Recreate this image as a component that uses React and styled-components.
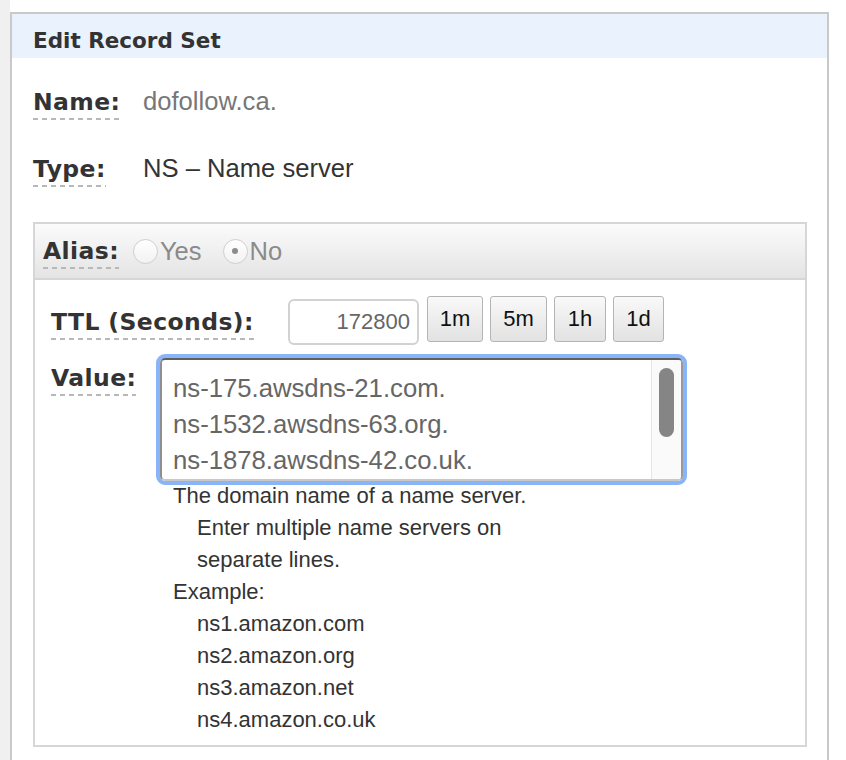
import React from "react";
import styled, { createGlobalStyle } from "styled-components";

const GlobalStyle = createGlobalStyle`
  html, body {
    margin: 0;
    padding: 0;
    background: #fff;
  }
  body {
    font-family: "Liberation Sans", Arial, sans-serif;
  }
`;

const Page = styled.div`
  display: flex;
  min-height: 760px;
`;

const Strip = styled.div`
  width: 10px;
  flex: none;
  background: #f0f0f0;
`;

const Panel = styled.div`
  box-sizing: border-box;
  width: 819px;
  margin-top: 12px;
  border: 2px solid #c9c9c9;
  border-bottom: none;
`;

const Header = styled.div`
  box-sizing: border-box;
  height: 44px;
  display: flex;
  align-items: center;
  padding: 8px 0 0 21px;
  background: #eaf2fd;
  font-family: "DejaVu Sans", Verdana, sans-serif;
  font-weight: bold;
  font-size: 21.5px;
  color: #333;
`;

const Body = styled.div`
  padding: 29px 20px 0 21px;
`;

const Row = styled.div`
  display: flex;
  align-items: baseline;
  margin-bottom: ${(p) => p.$gap || 0}px;
`;

const Label = styled.span`
  display: inline-block;
  flex: none;
  width: ${(p) => (p.$width ? p.$width + "px" : "auto")};
  margin-top: ${(p) => p.$top || 0}px;
  font-family: "DejaVu Sans", Verdana, sans-serif;
  font-weight: bold;
  font-size: 23.5px;
  letter-spacing: 0.4px;
  line-height: 28px;
  color: #333;
`;

const Dashed = styled.span`
  display: inline-block;
  padding-bottom: 4px;
  background: repeating-linear-gradient(to right, #b8b8b8 0 5px, transparent 5px 9px) left bottom / 100% 2px no-repeat;
`;

const Value = styled.span`
  font-size: 25.6px;
  color: ${(p) => (p.$muted ? "#777" : "#333")};
`;

const AliasBox = styled.div`
  margin-top: 35px;
  border: 2px solid #d6d6d6;
`;

const AliasBar = styled.div`
  height: 54px;
  display: flex;
  align-items: center;
  padding-left: 8px;
  background: linear-gradient(#fbfbfb, #e4e4e4);
  border-bottom: 2px solid #d6d6d6;
`;

const RadioItem = styled.label`
  display: flex;
  align-items: center;
  margin-left: ${(p) => p.$ml || 0}px;
  font-size: 25.5px;
  color: #8a8a8a;
`;

const RadioCircle = styled.span`
  box-sizing: border-box;
  width: 25px;
  height: 25px;
  margin-right: 2px;
  border-radius: 50%;
  border: 1px solid #cfcfcf;
  background: linear-gradient(#ffffff, #f2f2f2);
  display: flex;
  align-items: center;
  justify-content: center;
  &::after {
    content: "";
    width: 6px;
    height: 6px;
    border-radius: 50%;
    background: #8c8c8c;
    display: ${(p) => (p.$checked ? "block" : "none")};
  }
`;

const Inner = styled.div`
  padding: 16px 16px 9px 16px;
`;

const FieldRow = styled.div`
  display: flex;
  align-items: flex-start;
  margin-top: ${(p) => p.$top || 0}px;
`;

const TtlInput = styled.div`
  box-sizing: border-box;
  width: 131px;
  height: 46px;
  margin-top: 3px;
  margin-right: 8px;
  padding-right: 7px;
  border: 2px solid #d2d2d2;
  border-radius: 6px;
  display: flex;
  align-items: center;
  justify-content: flex-end;
  font-size: 22px;
  color: #666;
`;

const Buttons = styled.div`
  display: flex;
  gap: 7px;
`;

const Btn = styled.button`
  box-sizing: border-box;
  height: 46px;
  width: ${(p) => p.$w}px;
  padding: 0;
  border: 1px solid #b4b4b4;
  border-radius: 3px;
  background: linear-gradient(#f9f9f9, #e2e2e2);
  font-family: "Liberation Sans", Arial, sans-serif;
  font-size: 22px;
  color: #111;
`;

const ValueCol = styled.div`
  display: flex;
  flex-direction: column;
`;

const FocusRing = styled.div`
  box-sizing: border-box;
  width: 531px;
  border: 4px solid #8ab4f8;
  border-radius: 9px;
`;

const TextBox = styled.div`
  box-sizing: border-box;
  height: 123px;
  display: flex;
  border: 2px solid;
  border-color: #5e5e5e #9a9a9a #c8c8c8 #8e8e8e;
  border-radius: 5px;
  overflow: hidden;
  background: #fff;
`;

const Lines = styled.div`
  flex: 1;
  padding: 10px 0 0 11px;
  font-size: 25.7px;
  line-height: 36px;
  color: #666;
  white-space: nowrap;
`;

const Track = styled.div`
  width: 29px;
  flex: none;
  border-left: 1px solid #e6e6e6;
  background: #fafafa;
  display: flex;
  justify-content: center;
`;

const Thumb = styled.div`
  width: 15px;
  height: 69px;
  margin-top: 8px;
  border-radius: 8px;
  background: #858585;
`;

const Help = styled.div`
  margin-top: -5px;
  padding-left: 17px;
  font-size: 22px;
  line-height: 32px;
  color: #333;
`;

const HelpLine = styled.div`
  padding-left: ${(p) => (p.$indent ? 24 : 0)}px;
`;

const help = [
  ["The domain name of a name server.", false],
  ["Enter multiple name servers on", true],
  ["separate lines.", true],
  ["Example:", false],
  ["ns1.amazon.com", true],
  ["ns2.amazon.org", true],
  ["ns3.amazon.net", true],
  ["ns4.amazon.co.uk", true],
];

const servers = [
  "ns-175.awsdns-21.com.",
  "ns-1532.awsdns-63.org.",
  "ns-1878.awsdns-42.co.uk.",
];

export default function App() {
  return (
    <>
      <GlobalStyle />
      <Page>
        <Strip />
        <Panel>
          <Header>Edit Record Set</Header>
          <Body>
            <Row $gap={34}>
              <Label $width={110}>
                <Dashed>Name:</Dashed>
              </Label>
              <Value $muted>dofollow.ca.</Value>
            </Row>
            <Row>
              <Label $width={110}>
                <Dashed>Type:</Dashed>
              </Label>
              <Value>NS – Name server</Value>
            </Row>

            <AliasBox>
              <AliasBar>
                <Label $top={4}>
                  <Dashed>Alias:</Dashed>
                </Label>
                <RadioItem $ml={14}>
                  <RadioCircle />
                  Yes
                </RadioItem>
                <RadioItem $ml={21}>
                  <RadioCircle $checked />
                  No
                </RadioItem>
              </AliasBar>
              <Inner>
                <FieldRow>
                  <Label $width={237} $top={12}>
                    <Dashed>TTL (Seconds):</Dashed>
                  </Label>
                  <TtlInput>172800</TtlInput>
                  <Buttons>
                    <Btn $w={56}>1m</Btn>
                    <Btn $w={57}>5m</Btn>
                    <Btn $w={52}>1h</Btn>
                    <Btn $w={51}>1d</Btn>
                  </Buttons>
                </FieldRow>
                <FieldRow $top={9}>
                  <Label $width={105} $top={10}>
                    <Dashed>Value:</Dashed>
                  </Label>
                  <ValueCol>
                    <FocusRing>
                      <TextBox>
                        <Lines>
                          {servers.map((s) => (
                            <div key={s}>{s}</div>
                          ))}
                        </Lines>
                        <Track>
                          <Thumb />
                        </Track>
                      </TextBox>
                    </FocusRing>
                    <Help>
                      {help.map(([t, indent]) => (
                        <HelpLine key={t} $indent={indent}>
                          {t}
                        </HelpLine>
                      ))}
                    </Help>
                  </ValueCol>
                </FieldRow>
              </Inner>
            </AliasBox>
          </Body>
        </Panel>
      </Page>
    </>
  );
}
